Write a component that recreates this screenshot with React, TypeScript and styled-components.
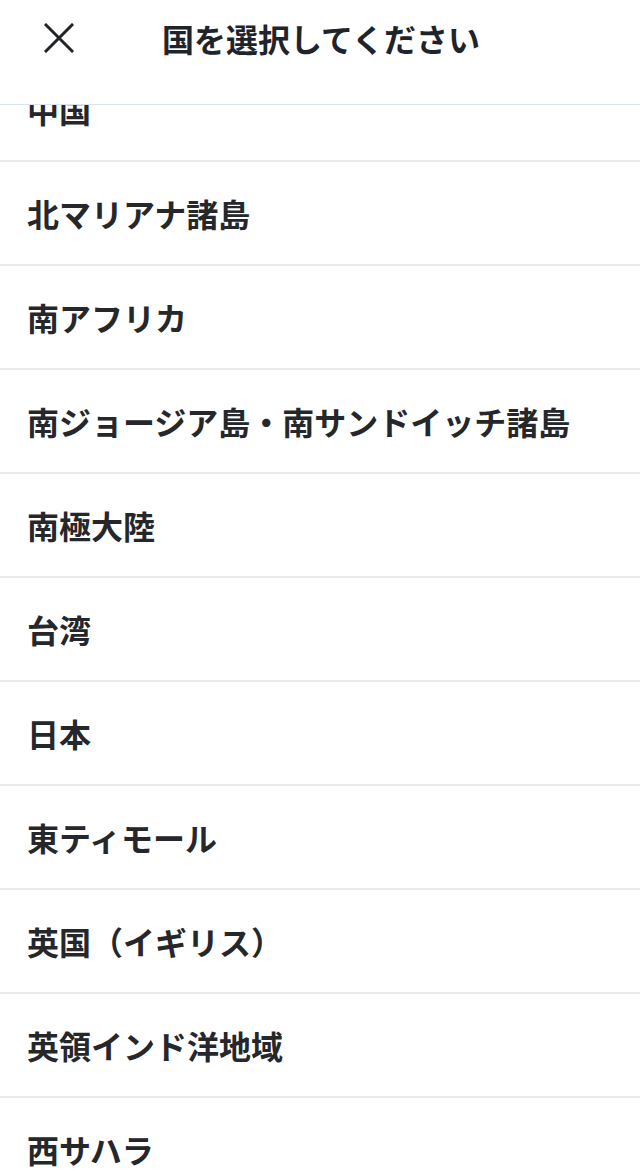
import React from "react";
import styled, { createGlobalStyle } from "styled-components";

const Global = createGlobalStyle`
  html, body { margin: 0; padding: 0; background: #ffffff; }
  body {
    font-family: "Noto Sans CJK JP", "Noto Sans", sans-serif;
    -webkit-font-smoothing: antialiased;
  }
`;

const Screen = styled.div`
  width: 640px;
  height: 1174px;
  display: flex;
  flex-direction: column;
  overflow: hidden;
  background: #fff;
`;

const Header = styled.header`
  position: relative;
  z-index: 1;
  height: 105px;
  flex: 0 0 auto;
  display: flex;
  align-items: center;
  padding: 0 0 28px 0;
  box-sizing: border-box;
  background: #fff;
  border-bottom: 1.5px solid #d9e2ee;
`;

const CloseButton = styled.button`
  width: 118px;
  height: 60px;
  border: 0;
  background: none;
  padding: 0;
  display: flex;
  align-items: center;
  justify-content: center;
  color: #202327;
  cursor: pointer;
`;

const Title = styled.h1`
  margin: 0 0 0 44px;
  font-size: 32px;
  font-weight: 700;
  color: #1f242b;
  letter-spacing: 0;
`;

const Viewport = styled.div`
  flex: 1 1 auto;
  overflow: hidden;
`;

const List = styled.ul<{ $offset: number }>`
  list-style: none;
  margin: ${(p) => -p.$offset}px 0 0 0;
  padding: 0;
`;

const Row = styled.li`
  height: 104px;
  box-sizing: border-box;
  display: flex;
  align-items: center;
  padding: 0 0 0 27px;
  border-bottom: 2px solid #ebebeb;
  font-size: 32px;
  font-weight: 700;
  color: #25272b;
`;

const countries = [
  "中国",
  "北マリアナ諸島",
  "南アフリカ",
  "南ジョージア島・南サンドイッチ諸島",
  "南極大陸",
  "台湾",
  "日本",
  "東ティモール",
  "英国（イギリス）",
  "英領インド洋地域",
  "西サハラ",
  "西サモア",
];

export default function App() {
  return (
    <>
      <Global />
      <Screen>
        <Header>
          <CloseButton aria-label="閉じる">
            <svg width="30" height="30" viewBox="0 0 30 30">
              <path
                d="M2 2 L28 28 M28 2 L2 28"
                stroke="currentColor"
                strokeWidth="3"
                strokeLinecap="square"
                fill="none"
              />
            </svg>
          </CloseButton>
          <Title>国を選択してください</Title>
        </Header>
        <Viewport>
          <List $offset={47}>
            {countries.map((c) => (
              <Row key={c}>{c}</Row>
            ))}
          </List>
        </Viewport>
      </Screen>
    </>
  );
}
